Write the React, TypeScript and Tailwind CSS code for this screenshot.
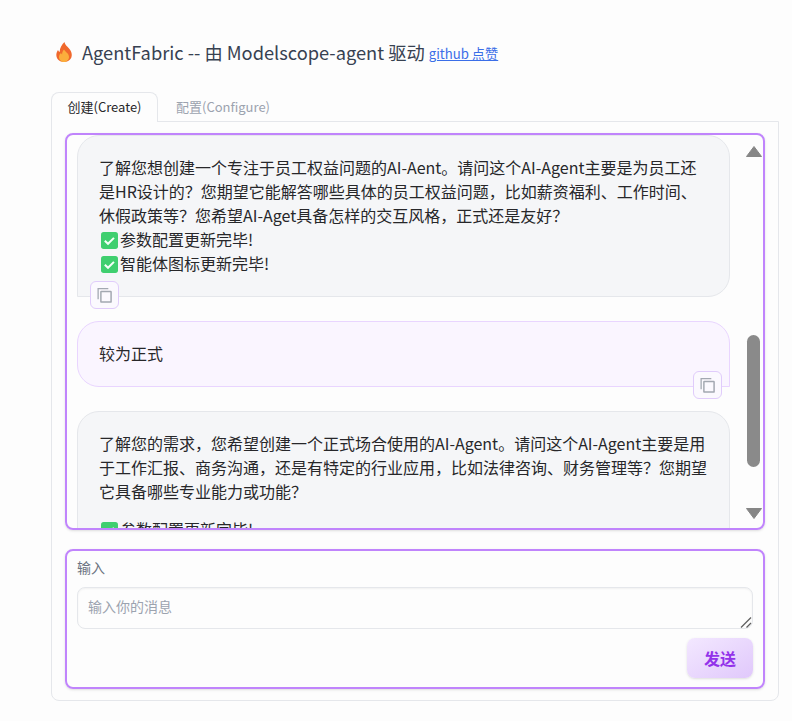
import React from 'react'

const FONT = '[font-family:"Noto_Sans_CJK_SC",sans-serif]'

const WATERMARKS = [
  [85, 90], [360, 90], [640, 90],
  [220, 248], [500, 248], [780, 248],
  [80, 408], [360, 408], [640, 408],
  [220, 570], [500, 570], [780, 570],
]

function CheckBox() {
  return (
    <svg viewBox="0 0 16 16" className="mr-[2px] ml-[2px] inline-block h-[17px] w-[17px] align-[-3px]">
      <rect width="16" height="16" rx="2.5" fill="#3fcf6f" />
      <path d="M3.6 8.2l3 2.9 5.6-5.6" fill="none" stroke="#f4fff8" strokeWidth="1.9" />
    </svg>
  )
}

function CopyButton({ className }: { className: string }) {
  return (
    <div className={`absolute flex h-7 w-[29px] items-center justify-center rounded-md border border-[#e0ccfb] bg-[#fbf9fe] ${className}`}>
      <svg viewBox="0 0 16 16" className="h-[17px] w-[17px]" fill="none" stroke="#a3a8b1" strokeWidth="1.2">
        <path d="M2 11.5V1.6h9.6" />
        <rect x="4.6" y="4.2" width="9.6" height="10" rx="0.4" strokeWidth="1.4" />
      </svg>
    </div>
  )
}

function Flame() {
  return (
    <svg viewBox="0 0 16 20" className="h-5 w-4">
      <path d="M8.500 0C8.800 3 12 4.800 14.200 8c2.300 3.500 2 7.500-.4 9.800C12.200 19.400 10 20 8 20s-4.200-.6-5.800-2.200C-.3 15.200-.2 11 2 8c.4.9.9 1.500 1.700 2C3.600 6.200 5.800 2.500 8.500 0z" fill="#f0682c" />
      <path d="M8 7.500c1 2.300 5 3.800 5 7.500 0 2.900-2.400 5-5 5s-5-2.100-5-5c0-1.900 1-3.100 2-4 .2.700.6 1.100 1.100 1.400C6 10.500 6.900 8.800 8 7.500z" fill="#fbae3c" />
    </svg>
  )
}

export default function App() {
  return (
    <div className={`relative h-[721px] w-[792px] overflow-hidden bg-[#fdfdfd] pr-[13px] pl-[51px] text-[#27272a] ${FONT}`}>
      <div className="flex h-[92px] items-start pt-[40px] pl-[5px]">
        <div className="mt-[2px]">
          <Flame />
        </div>
        <h1 className="ml-[10px] text-[18.25px] leading-[24px] text-[#374151]">AgentFabric -- 由 Modelscope-agent 驱动</h1>
        <a href="#" className="ml-[4px] pt-[2px] text-[13.2px] leading-[24px] text-[#3b6ee8] underline">github 点赞</a>
      </div>

      <div className="flex h-[30px] text-[13px]">
        <div className="relative z-10 flex h-[30px] w-[107px] items-center justify-center rounded-t-lg border border-b-0 border-[#e5e7eb] bg-[#fdfdfd] pb-[1px]">创建(Create)</div>
        <div className="flex w-[130px] items-center justify-center text-[#9ca3af]">配置(Configure)</div>
      </div>

      <div className="-mt-px h-[580px] rounded-b-lg border border-[#e5e7eb] px-[13px] pt-[11px]">
        <div className="flex h-[397px] overflow-hidden rounded-lg border-2 border-[#c084fc] shadow-sm">
          <div className="flex w-[663px] shrink-0 flex-col gap-6 overflow-hidden pl-[10px] text-[16px] leading-[24px]">
            <div className="relative shrink-0 rounded-[22px] rounded-bl-none border border-[#e5e7eb] bg-[#f5f6f8] px-[21px] pt-[19px] pb-[21px]">
              <p>了解您想创建一个专注于员工权益问题的AI-Aent。请问这个AI-Agent主要是为员工还是HR设计的？您期望它能解答哪些具体的员工权益问题，比如薪资福利、工作时间、休假政策等？您希望AI-Aget具备怎样的交互风格，正式还是友好？</p>
              <p><CheckBox />参数配置更新完毕!</p>
              <p><CheckBox />智能体图标更新完毕!</p>
              <CopyButton className="bottom-[-13px] left-[12px]" />
            </div>
            <div className="relative shrink-0 rounded-[22px] rounded-br-none border border-[#e9d5ff] bg-[#faf5ff] px-[21px] pt-[19px] pb-[21px]">
              <p>较为正式</p>
              <CopyButton className="right-[7px] bottom-[-13px]" />
            </div>
            <div className="shrink-0 rounded-[22px] border border-[#e5e7eb] bg-[#f5f6f8] px-[21px] pt-[19px] pb-[21px]">
              <p>了解您的需求，您希望创建一个正式场合使用的AI-Agent。请问这个AI-Agent主要是用于工作汇报、商务沟通，还是有特定的行业应用，比如法律咨询、财务管理等？您期望它具备哪些专业能力或功能？</p>
              <p className="mt-[14px]"><CheckBox />参数配置更新完毕!</p>
            </div>
          </div>
          <div className="flex flex-1 flex-col items-center pt-[11px] pl-[14px]">
            <svg viewBox="0 0 16 11" className="h-[11px] w-4"><path d="M8 0.500L15.500 10.500H.5z" fill="#868686" stroke="#868686" strokeLinejoin="round" /></svg>
            <div className="mt-[178px] h-[132px] w-[13px] rounded-full bg-[#8a8a8a]" />
            <svg viewBox="0 0 16 11" className="mt-[41px] h-[11px] w-4"><path d="M8 10.500L15.500 .5H.5z" fill="#868686" stroke="#868686" strokeLinejoin="round" /></svg>
          </div>
        </div>

        <div className="mt-[19px] flex h-[140px] flex-col rounded-lg border-2 border-[#c084fc] px-[10px] pt-[6px] shadow-sm">
          <label className="text-[14px] leading-[20px] text-[#6b7280]">输入</label>
          <div className="relative mt-[10px]">
            <textarea
              placeholder="输入你的消息"
              className="block h-[42px] w-full resize-none rounded-lg border border-[#e5e7eb] bg-[#fdfdfd] px-[10px] py-[8px] text-[14px] leading-[20px] shadow-[inset_0_1px_2px_rgba(0,0,0,0.05)] outline-none placeholder:text-[#9ca3af]"
            />
            <svg viewBox="0 0 12 12" className="absolute right-px bottom-px h-3 w-3" fill="none" stroke="#5f5f5f" strokeWidth="1.2">
              <path d="M1 11.500L11 1.500" />
              <path d="M6.500 11.500L11 7" />
            </svg>
          </div>
          <div className="mt-[9px] flex justify-end">
            <button className="h-10 w-[66px] rounded-lg bg-gradient-to-br from-[#f3e8ff] to-[#e0c8fb] text-[16px] font-semibold text-[#9333ea] shadow-sm">发送</button>
          </div>
        </div>
      </div>

      <div className="pointer-events-none absolute inset-0 overflow-hidden">
        {WATERMARKS.map(([x, y], i) => (
          <span
            key={i}
            className="absolute -translate-x-1/2 -translate-y-1/2 -rotate-[22deg] text-[22px] font-bold text-black/[0.02]"
            style={{ left: x, top: y }}
          >
            ModelScope
          </span>
        ))}
      </div>
    </div>
  )
}
